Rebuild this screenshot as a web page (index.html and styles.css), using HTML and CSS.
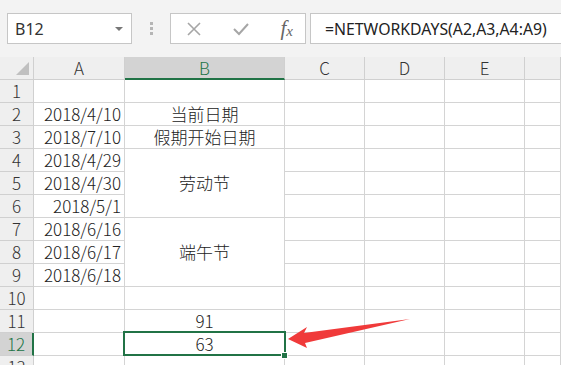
FILE: index.html
```html
<!DOCTYPE html>
<html lang="zh-CN">
<head>
  <meta charset="UTF-8" />
  <title>NETWORKDAYS</title>
  <link rel="stylesheet" href="styles.css">
</head>
<body>
  <!-- 编辑栏 -->
  <div class="formula-bar">
    <div class="name-box">
      <span>B12</span>
      <span class="caret"></span>
    </div>
    <div class="grip"><i></i><i></i><i></i></div>
    <div class="fx-box">
      <svg width="16" height="16" viewBox="0 0 16 16"><path d="M2 2 L14 14 M14 2 L2 14" stroke="#a6a6a6" stroke-width="1.6" fill="none"/></svg>
      <svg width="18" height="16" viewBox="0 0 18 16"><path d="M2 8 L7 13 L16 3" stroke="#a6a6a6" stroke-width="2" fill="none"/></svg>
      <span class="fx">f<sub>x</sub></span>
    </div>
    <div class="formula">=NETWORKDAYS(A2,A3,A4:A9)</div>
  </div>

  <!-- 工作表 -->
  <div class="sheet">
    <div class="hd corner"><span class="tri"></span></div>
    <div class="hd">A</div>
    <div class="hd hd-sel">B</div>
    <div class="hd">C</div>
    <div class="hd">D</div>
    <div class="hd">E</div>
    <div class="hd"></div>

    <div class="rh">1</div><div class="c"></div><div class="c"></div><div class="c"></div><div class="c"></div><div class="c"></div><div class="c"></div>
    <div class="rh">2</div><div class="c num">2018/4/10</div><div class="c mid">当前日期</div><div class="c"></div><div class="c"></div><div class="c"></div><div class="c"></div>
    <div class="rh">3</div><div class="c num">2018/7/10</div><div class="c mid">假期开始日期</div><div class="c"></div><div class="c"></div><div class="c"></div><div class="c"></div>
    <div class="rh">4</div><div class="c num">2018/4/29</div><div class="c mid span3">劳动节</div><div class="c"></div><div class="c"></div><div class="c"></div><div class="c"></div>
    <div class="rh">5</div><div class="c num">2018/4/30</div><div class="c"></div><div class="c"></div><div class="c"></div><div class="c"></div>
    <div class="rh">6</div><div class="c num">2018/5/1</div><div class="c"></div><div class="c"></div><div class="c"></div><div class="c"></div>
    <div class="rh">7</div><div class="c num">2018/6/16</div><div class="c mid span3">端午节</div><div class="c"></div><div class="c"></div><div class="c"></div><div class="c"></div>
    <div class="rh">8</div><div class="c num">2018/6/17</div><div class="c"></div><div class="c"></div><div class="c"></div><div class="c"></div>
    <div class="rh">9</div><div class="c num">2018/6/18</div><div class="c"></div><div class="c"></div><div class="c"></div><div class="c"></div>
    <div class="rh">10</div><div class="c"></div><div class="c"></div><div class="c"></div><div class="c"></div><div class="c"></div><div class="c"></div>
    <div class="rh">11</div><div class="c"></div><div class="c mid">91</div><div class="c"></div><div class="c"></div><div class="c"></div><div class="c"></div>
    <div class="rh rh-sel">12</div><div class="c"></div><div class="c mid active">63<span class="handle"></span></div><div class="c"></div><div class="c"></div><div class="c"></div><div class="c"></div>
    <div class="rh">13</div><div class="c"></div><div class="c"></div><div class="c"></div><div class="c"></div><div class="c"></div><div class="c"></div>

    <svg class="arrow" width="561" height="365" viewBox="0 0 561 365">
      <path d="M288 339 L307 327 L304 333 L410 319 L305 343 L307 348 Z" fill="#f03a3a"/>
    </svg>
  </div>
</body>
</html>
```

FILE: styles.css
```css
/* 页面基础 */
body {
  margin: 0;
  background: #f3f3f3;
  font-family: "Noto Sans CJK SC", "Noto Sans", sans-serif;
  color: #222;
  overflow: hidden;
}

/* 编辑栏 */
.formula-bar {
  display: flex;
  align-items: center;
  height: 57px;
  padding-left: 7px;
  box-sizing: border-box;
}

.name-box,
.fx-box,
.formula {
  height: 31px;
  box-sizing: border-box;
  background: #fff;
  border: 1px solid #c6c6c6;
  display: flex;
  align-items: center;
}

.name-box {
  width: 125px;
  padding: 0 7px;
  justify-content: space-between;
  font-family: "Noto Sans", sans-serif;
  font-size: 16px;
  color: #333;
}

.caret {
  width: 0;
  height: 0;
  border-left: 4px solid transparent;
  border-right: 4px solid transparent;
  border-top: 4px solid #777;
  margin-right: 1px;
}

.grip {
  width: 38px;
  display: flex;
  flex-direction: column;
  align-items: center;
  gap: 2px;
}

.grip i {
  width: 3px;
  height: 3px;
  background: #b5b5b5;
}

.fx-box {
  width: 136px;
  padding: 0 12px 0 15px;
  justify-content: space-between;
}

.fx {
  font-family: "Liberation Serif", serif;
  font-style: italic;
  font-size: 21px;
  color: #666;
  line-height: 1;
}

.fx sub {
  font-size: 15px;
  vertical-align: -1px;
}

.formula {
  flex: 1;
  margin-left: 4px;
  border-right: none;
  padding-left: 14px;
  font-family: "Noto Sans", sans-serif;
  font-size: 15.8px;
  color: #222;
}

/* 工作表网格 */
.sheet {
  position: relative;
  display: grid;
  grid-template-columns: 34px 91px 160px 80px 80px 80px 1fr;
  grid-auto-rows: 23px;
  background: #fff;
}

.hd,
.rh,
.c {
  box-sizing: border-box;
  border-right: 1px solid #d4d4d4;
  border-bottom: 1px solid #d4d4d4;
  font-size: 17px;
  font-weight: 300;
  line-height: 22px;
  white-space: nowrap;
}

.hd {
  background: #efefef;
  text-align: center;
  color: #333;
  border-color: #d0d0d0;
}

.hd-sel {
  background: #d3d3d3;
  color: #217346;
  border-bottom: 2px solid #217346;
}

.corner {
  position: relative;
}

.tri {
  position: absolute;
  right: 4px;
  bottom: 4px;
  border-left: 13px solid transparent;
  border-bottom: 13px solid #c0c0c0;
}

.rh {
  background: #efefef;
  text-align: center;
  color: #333;
  border-color: #d0d0d0;
}

.rh-sel {
  background: #d3d3d3;
  color: #217346;
  border-right: 2px solid #217346;
}

.num {
  text-align: right;
  padding-right: 3px;
}

.mid {
  text-align: center;
}

.span3 {
  grid-row: span 3;
  line-height: 68px;
}

/* 选中单元格 */
.active {
  position: relative;
}

.active::after {
  content: "";
  position: absolute;
  top: -2px;
  left: -2px;
  right: -2px;
  bottom: -1px;
  border: 2px solid #217346;
}

.handle {
  position: absolute;
  right: -4px;
  bottom: -4px;
  width: 5px;
  height: 5px;
  background: #217346;
  border: 1px solid #fff;
  z-index: 1;
}

.arrow {
  position: absolute;
  left: 0;
  top: -57px;
  pointer-events: none;
}
```
